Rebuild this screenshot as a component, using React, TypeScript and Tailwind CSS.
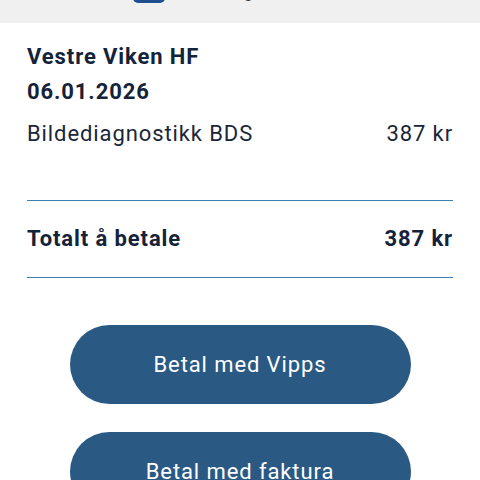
import React from "react";

export default function App() {
  const font = { fontFamily: "Roboto, 'Liberation Sans', sans-serif" };
  return (
    <div className="w-[480px] h-[480px] bg-white overflow-hidden text-[#14223a] tracking-[0.9px]" style={font}>
      <div className="h-[23px] bg-[#f0f0f0] overflow-hidden">
        <div className="flex items-end h-[33px] -mt-[30px] pl-[133px]">
          <div className="w-[32px] h-[33px] rounded-[5px] bg-[#1f4f8f]" />
          <span className="ml-[30px] text-[16px] leading-[16px] mb-[2px] tracking-normal text-[#333]">Betaling</span>
        </div>
      </div>
      <div className="px-[27px] pt-[19px]">
        <div className="text-[22px] leading-[30px] font-bold">Vestre Viken HF</div>
        <div className="mt-[5px] text-[22px] leading-[30px] font-bold">06.01.2026</div>
        <div className="mt-[12px] flex justify-between text-[22px] leading-[30px] text-[#1a263a]">
          <span>Bildediagnostikk BDS</span>
          <span>387 kr</span>
        </div>
        <div className="mt-[51px] border-t-[1.5px] border-[#3f7fb6]" />
        <div className="py-[23px] flex justify-between text-[22px] leading-[30px] font-bold">
          <span>Totalt å betale</span>
          <span>387 kr</span>
        </div>
        <div className="border-t-[1.5px] border-[#3f7fb6]" />
      </div>
      <div className="mt-[47px] flex flex-col items-center gap-[28px]">
        <button className="w-[341px] h-[79px] rounded-full bg-[#2a5a84] text-white text-[22px]">Betal med Vipps</button>
        <button className="w-[341px] h-[79px] rounded-full bg-[#2a5a84] text-white text-[22px]">Betal med faktura</button>
      </div>
    </div>
  );
}
